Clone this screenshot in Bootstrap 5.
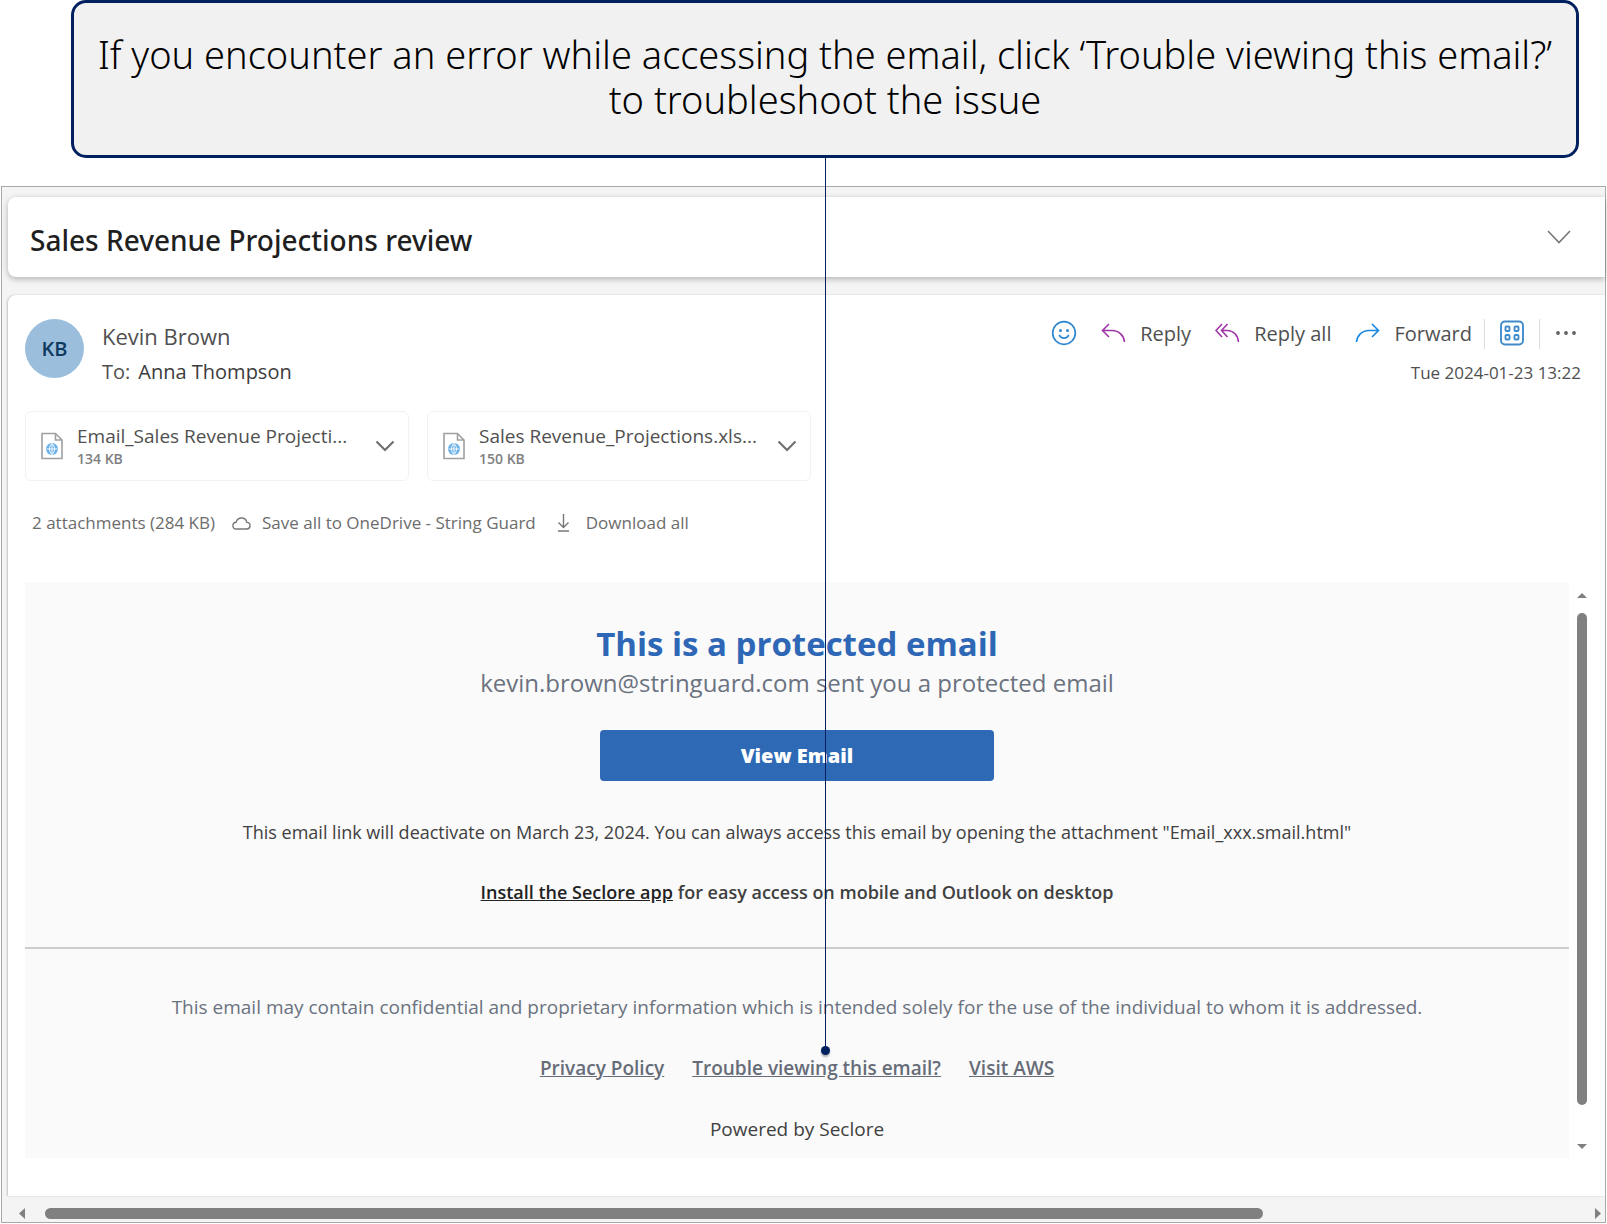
<!DOCTYPE html>
<html lang="en">
<head>
<meta charset="utf-8">
<meta name="viewport" content="width=device-width, initial-scale=1">
<title>Sales Revenue Projections review</title>
<link href="https://cdn.jsdelivr.net/npm/bootstrap@5.3.0/dist/css/bootstrap.min.css" rel="stylesheet">
<style>
body{font-family:"Open Sans","Noto Sans",sans-serif;background:#fff;color:#505050;line-height:28px}
svg{display:block;flex:none}
.callout{margin:0 28px 28px 71px;border:3px solid #002060;border-radius:15px;background:#f1f1f1;color:#000;font-family:"Noto Sans","Open Sans",sans-serif;font-size:38px;font-weight:300;line-height:45px;padding:29px 0 33px}
.connector{top:100%;left:50%;width:1px;height:896px;background:#002060;z-index:5}
.connector::after{content:"";position:absolute;left:-4px;bottom:-4px;width:9px;height:9px;border-radius:50%;background:#002060;box-shadow:0 2px 2px rgba(0,0,0,.3)}
.viewer{margin:0 1px 1px;border:1px solid #a9a9a9;background:#f4f4f4;padding-top:10px}
.subject{margin-left:6px;padding:0 34px 0 22px;height:80px;background:#fff;border-radius:8px 0 0 8px;box-shadow:0 2px 6px rgba(0,0,0,.28)}
.subject h1{font-family:"Noto Sans","Open Sans",sans-serif;font-size:28px;font-weight:500;line-height:36px;color:#1f1f1f;padding-top:6px}
.message{margin:18px 0 0 6px;padding:24px 0 38px 17px;background:#fff;border-radius:8px 0 0 0;box-shadow:-1px 0 2px rgba(0,0,0,.2)}
.plain{border:0;background:none;padding:0;color:inherit}
.avatar{width:59px;height:59px;border-radius:50%;background:#9abedc;color:#0f3a5f;font-size:20px;font-weight:600}
.sender-head{padding-right:24px}
.person{margin-left:18px;padding-top:3px;font-size:22px}
.person .to-line{gap:8px;margin-top:8px;font-size:20px}
.dark-ink{color:#3c3c3c}
.toolbar-row{font-size:20px;gap:24px}
.toolbar-row .with-text{gap:14px}
.toolbar-row svg{margin-bottom:3px}
.tail{gap:15px;margin-left:-12px;margin-right:4px}
.divide{width:1px;height:30px;background:#ddd}
.stamp{font-size:17px;padding-top:10px}
.files{gap:18px;margin-top:24px}
.file{width:384px;height:70px;border:1px solid #f2f2f2;border-radius:6px;padding:0 13px 0 15px}
.file-icon{margin-right:14px}
.file-name{font-size:19px;line-height:26px}
.file-size{font-size:14px;line-height:20px;font-weight:600;color:#808080}
.file-actions{gap:17px;margin-top:28px;padding-left:7px;font-size:17px;color:#6c6c6c}
.file-actions .with-text{gap:11px}
.mail-wrap{margin-top:45px}
.mail{background:#fafafa;padding-bottom:15px}
.mail h2{font-size:33px;font-weight:700;line-height:44px;color:#2e67b5;padding-top:40px}
.sender{font-size:24px;line-height:34px;color:#6b7280}
.view-btn{width:394px;height:51px;border:0;border-radius:4px;background:#2e69b5;color:#fff;font-size:20px;font-weight:800;margin-top:30px}
.note{font-size:18px;color:#404040;margin-top:37px}
.install{font-size:18px;font-weight:600;color:#404040;margin-top:32px}
.install a{color:#222}
.rule{height:2px;background:#ccc;margin-top:41px}
.legal{font-size:19px;color:#6b7280;margin-top:44px}
.foot-links{gap:28px;margin-top:33px;font-size:19px;font-weight:600}
.foot-links a{color:#666c78}
.powered{font-size:19px;color:#404040;margin-top:33px}
.vbar{width:36px;padding:11px 10px 9px 0}
.vbar .thumb{width:10px;height:492px;border-radius:5px;background:#808080;margin-top:15px}
.hbar{height:26px;padding:12px 4px 3px 17px}
.hbar .thumb{width:77%;height:11px;border-radius:6px;background:#808080;margin-left:20px}
</style>
<script src="https://cdn.jsdelivr.net/npm/bootstrap@5.3.0/dist/js/bootstrap.bundle.min.js"></script>
</head>
<body>
<svg width="0" height="0" class="position-absolute" aria-hidden="true">
  <symbol id="file" viewBox="0 0 22 28"><path d="M1 1.500h13.500l6.500 6.500v18.500H1zM14.500 1.500v6.500h6.500" fill="none" stroke="#a0a0a0" stroke-width="1.600"/><circle cx="11" cy="17" r="6" fill="#6ab0e8"/><path d="M5.500 17h11M11 11.500v11M11 11.500c-3.400 3-3.400 8 0 11c3.400-3 3.400-8 0-11" fill="none" stroke="#fff" stroke-width=".9"/></symbol>
  <symbol id="chev" viewBox="0 0 20 12"><path d="M1.500 1.500l8.500 8.500l8.500-8.500" fill="none" stroke="#707070" stroke-width="2.200"/></symbol>
</svg>

<div class="callout position-relative text-center">
  If you encounter an error while accessing the email, click ‘Trouble viewing this email?’<br>to troubleshoot the issue
  <div class="connector position-absolute"></div>
</div>

<main class="viewer">
  <header class="subject d-flex align-items-center justify-content-between">
    <h1 class="m-0">Sales Revenue Projections review</h1>
    <button class="plain" aria-label="Expand"><svg width="24" height="14" viewBox="0 0 24 14"><path d="M1 1l11 11.500l11-11.500" fill="none" stroke="#777" stroke-width="1.600"/></svg></button>
  </header>

  <section class="message">
    <div class="sender-head d-flex align-items-start">
      <div class="avatar d-flex align-items-center justify-content-center">KB</div>
      <div class="person">
        <div>Kevin Brown</div>
        <div class="to-line d-flex"><span>To:</span><span class="dark-ink">Anna Thompson</span></div>
      </div>
      <div class="ms-auto">
        <div class="toolbar-row d-flex align-items-center">
          <button class="plain" aria-label="React"><svg width="26" height="26" viewBox="0 0 26 26" fill="none" stroke="#2f86d0" stroke-width="1.700"><circle cx="13" cy="13" r="11.300"/><path d="M8.500 15.500c2 3.500 7 3.500 9 0" stroke-linecap="round"/><circle cx="9.500" cy="10.500" r="1.500" fill="#2f86d0" stroke="none"/><circle cx="16.500" cy="10.500" r="1.500" fill="#2f86d0" stroke="none"/></svg></button>
          <button class="plain with-text d-flex align-items-center"><svg width="25" height="20" viewBox="0 0 25 20" fill="none" stroke="#a035a8" stroke-width="1.600"><path d="M8 1L1.500 7.500L8 14M1.500 7.500H11c7 0 12 5 12.500 11.500"/></svg>Reply</button>
          <button class="plain with-text d-flex align-items-center"><svg width="25" height="20" viewBox="0 0 25 20" fill="none" stroke="#a035a8" stroke-width="1.600"><path d="M7 1L1 7.500L7 14M12.500 1L6.500 7.500L12.500 14M6.500 7.500H12c6.500 0 11 5 11.500 11.500"/></svg>Reply all</button>
          <button class="plain with-text d-flex align-items-center"><svg width="25" height="20" viewBox="0 0 25 20" fill="none" stroke="#1787e0" stroke-width="1.600"><path d="M17 1l6.500 6.500L17 14M23.500 7.500H14C7 7.500 2 12.500 1.500 19"/></svg>Forward</button>
          <div class="tail d-flex align-items-center">
            <span class="divide"></span>
            <button class="plain" aria-label="Apps"><svg width="24" height="26" viewBox="0 0 24 26" fill="none" stroke="#3f8acb" stroke-width="1.900"><rect x="1" y="1.500" width="22" height="23" rx="4"/><rect x="5.500" y="6.500" width="4" height="4.500" rx="1"/><rect x="14.500" y="6.500" width="4" height="4.500" rx="1"/><rect x="5.500" y="15" width="4" height="4.500" rx="1"/><rect x="14.500" y="15" width="4" height="4.500" rx="1"/></svg></button>
            <span class="divide"></span>
            <button class="plain" aria-label="More"><svg width="22" height="6" viewBox="0 0 22 6" fill="#606060"><circle cx="3" cy="3" r="1.900"/><circle cx="11" cy="3" r="1.900"/><circle cx="19" cy="3" r="1.900"/></svg></button>
          </div>
        </div>
        <div class="stamp text-end">Tue 2024-01-23 13:22</div>
      </div>
    </div>

    <div class="files d-flex">
      <div class="file d-flex align-items-center">
        <svg class="file-icon" width="22" height="28"><use href="#file"/></svg>
        <div class="flex-grow-1"><div class="file-name">Email_Sales Revenue Projecti...</div><div class="file-size">134 KB</div></div>
        <button class="plain" aria-label="Attachment options"><svg width="20" height="12"><use href="#chev"/></svg></button>
      </div>
      <div class="file d-flex align-items-center">
        <svg class="file-icon" width="22" height="28"><use href="#file"/></svg>
        <div class="flex-grow-1"><div class="file-name">Sales Revenue_Projections.xls...</div><div class="file-size">150 KB</div></div>
        <button class="plain" aria-label="Attachment options"><svg width="20" height="12"><use href="#chev"/></svg></button>
      </div>
    </div>

    <div class="file-actions d-flex align-items-center">
      <span>2 attachments (284 KB)</span>
      <button class="plain with-text d-flex align-items-center"><svg width="19" height="13" viewBox="0 0 19 13"><path d="M4.500 12h10a3.300 3.300 0 0 0 .4-6.600a5.500 5.500 0 0 0-10.700-.2A3.400 3.400 0 0 0 4.500 12z" fill="none" stroke="#777" stroke-width="1.400"/></svg>Save all to OneDrive - String Guard</button>
      <button class="plain d-flex align-items-center ms-1"><svg class="me-3" width="13" height="18" viewBox="0 0 13 18"><path d="M6.500 0v13M1.500 8.500l5 5l5-5M1 17h11" fill="none" stroke="#777" stroke-width="1.400"/></svg>Download all</button>
    </div>

    <div class="mail-wrap d-flex">
      <article class="mail flex-grow-1 text-center">
        <h2 class="m-0">This is a protected email</h2>
        <div class="sender">kevin.brown@stringuard.com sent you a protected email</div>
        <button class="view-btn">View Email</button>
        <div class="note">This email link will deactivate on March 23, 2024. You can always access this email by opening the attachment "Email_xxx.smail.html"</div>
        <div class="install"><a href="#">Install the Seclore app</a> for easy access on mobile and Outlook on desktop</div>
        <div class="rule"></div>
        <div class="legal">This email may contain confidential and proprietary information which is intended solely for the use of the individual to whom it is addressed.</div>
        <nav class="foot-links d-flex justify-content-center" aria-label="Footer"><a href="#">Privacy Policy</a><a href="#">Trouble viewing this email?</a><a href="#">Visit AWS</a></nav>
        <div class="powered">Powered by Seclore</div>
      </article>
      <div class="vbar d-flex flex-column align-items-center">
        <svg width="10" height="5"><path d="M5 0l5 5H0z" fill="#808080"/></svg>
        <div class="thumb"></div>
        <svg class="mt-auto" width="10" height="5"><path d="M0 0h10L5 5z" fill="#808080"/></svg>
      </div>
    </div>
  </section>

  <div class="hbar d-flex align-items-center">
    <svg width="6" height="11"><path d="M6 0v11L0 5.500z" fill="#808080"/></svg>
    <div class="thumb"></div>
    <svg class="ms-auto" width="6" height="11"><path d="M0 0l6 5.500L0 11z" fill="#808080"/></svg>
  </div>
</main>
</body>
</html>
